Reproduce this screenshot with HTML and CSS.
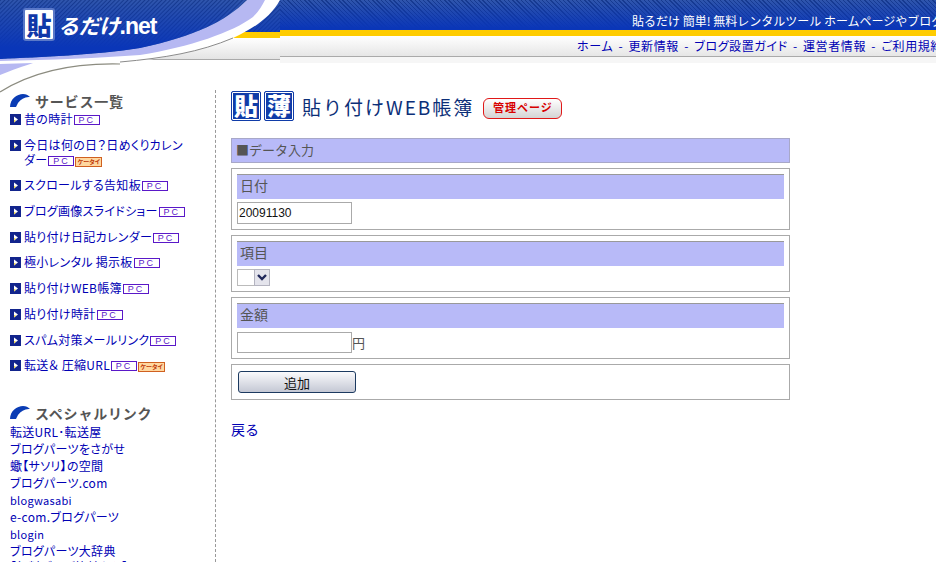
FILE: index.html
```html
<!DOCTYPE html>
<html lang="ja">
<head>
    <meta charset="UTF-8">
    <title>貼り付けWEB帳簿</title>
    <link rel="stylesheet" href="styles.css">
</head>
<body>
    <!-- Header -->
    <div class="header">
        <div class="logo-area">
            <svg class="swoosh" width="280" height="95" viewBox="0 0 280 95">
                <defs>
                    <pattern id="hatch" width="3" height="3" patternUnits="userSpaceOnUse" patternTransform="rotate(45)">
                        <rect width="3" height="3" fill="#2f55ac"/>
                        <rect width="1" height="3" fill="#173a8e"/>
                    </pattern>
                    <linearGradient id="fade" gradientUnits="userSpaceOnUse" x1="0" y1="0" x2="0" y2="50">
                        <stop offset="0" stop-color="#0a36b8" stop-opacity="0"/>
                        <stop offset="0.95" stop-color="#0a36b8"/>
                    </linearGradient>
                    <linearGradient id="band" x1="0" y1="0" x2="0" y2="1">
                        <stop offset="0" stop-color="#ffffff"/>
                        <stop offset="1" stop-color="#e4e4e4"/>
                    </linearGradient>
                </defs>
                <!-- band behind the curve -->
                <rect x="120" y="0" width="160" height="32" fill="url(#hatch)"/>
                <rect x="120" y="0" width="160" height="32" fill="url(#fade)"/>
                <rect x="120" y="32" width="160" height="6" fill="#ffcc00"/>
                <rect x="120" y="38" width="160" height="21" fill="url(#band)"/>
                <rect x="120" y="59" width="160" height="1" fill="#aaaaaa"/>
                <!-- white and lavender curves -->
                <path d="M280 0C270 18 254 28 233 38C200 52 165 58 117 64L0 64V59C90 54 190 40 247 0Z" fill="#ffffff"/>
                <path d="M247 0C225 22 195 36 140 48C95 55 40 57 0 59V61C50 60 100 58 140 55C190 47 233 32 253 17C259 11 262 6 265 0Z" fill="#b6b8f2"/>
                <path d="M233 38C200 52 165 58 120 62" fill="none" stroke="#8a8a8a" stroke-width="1"/>
                <!-- blue corner -->
                <path d="M0 0H247C225 22 195 36 140 48C95 55 40 57 0 59Z" fill="url(#hatch)"/>
                <path d="M0 0H247C225 22 195 36 140 48C95 55 40 57 0 59Z" fill="url(#fade)"/>
                <!-- lower swoosh -->
                <path d="M0 64C10 64 22 63 33 63C24 66 12 70 0 75Z" fill="#b6b8f2"/>
                <path d="M120 64C75 63 35 70 0 92" fill="none" stroke="#8c8c80" stroke-width="1.2"/>
            </svg>
            <div class="logo"><span class="logo-tile">貼</span><span class="logo-text">るだけ<b>.net</b></span></div>
        </div>
        <div class="head-right">
            <div class="head-msg">貼るだけ 簡単! 無料レンタルツール ホームページやブログに貼るだけで使えるサービス</div>
            <div class="head-nav"><a href="#">ホーム</a> - <a href="#">更新情報</a> - <a href="#">ブログ設置ガイド</a> - <a href="#">運営者情報</a> - <a href="#">ご利用規約</a></div>
        </div>
    </div>

    <div class="page">
        <!-- Side menu -->
        <div class="side">
            <h3 class="side-title">
                <svg width="20" height="13" viewBox="0 0 20 13"><path d="M0 13C0 5 7 0 13 0C16 0 18 1 20 3C15 2.5 11 5 8 9L6 13Z" fill="#0a3cb4"/></svg>
                サービス一覧
            </h3>
            <ul class="service-list">
                <li><svg class="mark" viewBox="0 0 11 11"><rect width="11" height="11" fill="#12248c"/><path d="M4 2.5L8 5.5L4 8.5Z" fill="#fff"/><path d="M4 6L6 6.5L4 8.5Z" fill="#f0d840"/></svg><span><a href="#">昔の時計</a><i class="pc">PC</i></span></li>
                <li><svg class="mark" viewBox="0 0 11 11"><rect width="11" height="11" fill="#12248c"/><path d="M4 2.5L8 5.5L4 8.5Z" fill="#fff"/><path d="M4 6L6 6.5L4 8.5Z" fill="#f0d840"/></svg><span><a href="#">今日は何の日？日めくりカレンダー</a><i class="pc">PC</i><i class="mobile">ケータイ</i></span></li>
                <li><svg class="mark" viewBox="0 0 11 11"><rect width="11" height="11" fill="#12248c"/><path d="M4 2.5L8 5.5L4 8.5Z" fill="#fff"/><path d="M4 6L6 6.5L4 8.5Z" fill="#f0d840"/></svg><span><a href="#">スクロールする告知板</a><i class="pc">PC</i></span></li>
                <li><svg class="mark" viewBox="0 0 11 11"><rect width="11" height="11" fill="#12248c"/><path d="M4 2.5L8 5.5L4 8.5Z" fill="#fff"/><path d="M4 6L6 6.5L4 8.5Z" fill="#f0d840"/></svg><span><a href="#">ブログ画像スライドショー</a><i class="pc">PC</i></span></li>
                <li><svg class="mark" viewBox="0 0 11 11"><rect width="11" height="11" fill="#12248c"/><path d="M4 2.5L8 5.5L4 8.5Z" fill="#fff"/><path d="M4 6L6 6.5L4 8.5Z" fill="#f0d840"/></svg><span><a href="#">貼り付け日記カレンダー</a><i class="pc">PC</i></span></li>
                <li><svg class="mark" viewBox="0 0 11 11"><rect width="11" height="11" fill="#12248c"/><path d="M4 2.5L8 5.5L4 8.5Z" fill="#fff"/><path d="M4 6L6 6.5L4 8.5Z" fill="#f0d840"/></svg><span><a href="#">極小レンタル 掲示板</a><i class="pc">PC</i></span></li>
                <li><svg class="mark" viewBox="0 0 11 11"><rect width="11" height="11" fill="#12248c"/><path d="M4 2.5L8 5.5L4 8.5Z" fill="#fff"/><path d="M4 6L6 6.5L4 8.5Z" fill="#f0d840"/></svg><span><a href="#">貼り付けWEB帳簿</a><i class="pc">PC</i></span></li>
                <li><svg class="mark" viewBox="0 0 11 11"><rect width="11" height="11" fill="#12248c"/><path d="M4 2.5L8 5.5L4 8.5Z" fill="#fff"/><path d="M4 6L6 6.5L4 8.5Z" fill="#f0d840"/></svg><span><a href="#">貼り付け時計</a><i class="pc">PC</i></span></li>
                <li><svg class="mark" viewBox="0 0 11 11"><rect width="11" height="11" fill="#12248c"/><path d="M4 2.5L8 5.5L4 8.5Z" fill="#fff"/><path d="M4 6L6 6.5L4 8.5Z" fill="#f0d840"/></svg><span><a href="#">スパム対策メールリンク</a><i class="pc">PC</i></span></li>
                <li><svg class="mark" viewBox="0 0 11 11"><rect width="11" height="11" fill="#12248c"/><path d="M4 2.5L8 5.5L4 8.5Z" fill="#fff"/><path d="M4 6L6 6.5L4 8.5Z" fill="#f0d840"/></svg><span><a href="#">転送＆ 圧縮URL</a><i class="pc">PC</i><i class="mobile">ケータイ</i></span></li>
            </ul>

            <h3 class="side-title">
                <svg width="20" height="13" viewBox="0 0 20 13"><path d="M0 13C0 5 7 0 13 0C16 0 18 1 20 3C15 2.5 11 5 8 9L6 13Z" fill="#0a3cb4"/></svg>
                スペシャルリンク
            </h3>
            <ul class="link-list">
                <li><a href="#">転送URL･転送屋</a></li>
                <li><a href="#">ブログパーツをさがせ</a></li>
                <li><a href="#">蠍【サソリ】の空間</a></li>
                <li><a href="#">ブログパーツ.com</a></li>
                <li><a class="small" href="#">blogwasabi</a></li>
                <li><a href="#">e-com.ブログパーツ</a></li>
                <li><a class="small" href="#">blogin</a></li>
                <li><a href="#">ブログパーツ大辞典</a></li>
                <li><a href="#">【無料ブログ比較から】</a></li>
            </ul>
        </div>

        <!-- Main form -->
        <div class="main">
            <div class="title-row">
                <span class="tile">貼</span>
                <span class="tile">薄</span>
                <h1>貼り付けWEB帳簿</h1>
                <a class="admin" href="#">管理ページ</a>
            </div>

            <div class="section-bar">■データ入力</div>

            <div class="box">
                <div class="bar">日付</div>
                <input class="field" type="text" value="20091130">
            </div>
            <div class="box">
                <div class="bar">項目</div>
                <div class="select-wrap">
                    <select class="pick"><option></option></select>
                    <svg class="arrow" width="16" height="17" viewBox="0 0 16 17"><rect width="16" height="17" fill="#b4b4c0"/><rect x="1" y="1" width="14" height="15" fill="#e4e4ec"/><path d="M4 6L8 10L12 6" fill="none" stroke="#20285a" stroke-width="2.4"/></svg>
                </div>
            </div>
            <div class="box">
                <div class="bar">金額</div>
                <div class="amount"><input class="field" type="text"><span>円</span></div>
            </div>
            <div class="box">
                <button class="add" type="button">追加</button>
            </div>

            <a class="back" href="#">戻る</a>
        </div>
    </div>
</body>
</html>
```

FILE: styles.css
```css
html, body {
    height: 100%;
    overflow: hidden;
}
body {
    margin: 0;
    background-color: #fff;
    color: #555;
    font-family: "Noto Sans CJK JP", "Liberation Sans", sans-serif;
    font-size: 12px;
}
a {
    color: #0000b4;
    text-decoration: none;
}

/* Header */
.header {
    display: flex;
    height: 90px;
}
.logo-area {
    position: relative;
    flex: none;
    width: 280px;
}
.swoosh {
    position: absolute;
    top: 0;
    left: 0;
}
.logo {
    position: relative;
    display: flex;
    align-items: center;
    gap: 3px;
    padding: 8px 0 0 23px;
}
.logo-tile {
    width: 28px;
    height: 29px;
    border: 2px solid #5a78c8;
    border-radius: 3px;
    background-color: #fff;
    color: #1038a8;
    font-size: 25px;
    font-weight: 900;
    line-height: 28px;
    text-align: center;
}
.logo-text {
    color: #fff;
    font-size: 21px;
    font-weight: 700;
    font-style: italic;
    letter-spacing: -0.5px;
}
.logo-text b {
    font-family: "Liberation Sans", sans-serif;
    font-size: 23px;
    font-style: normal;
    letter-spacing: -1px;
}
.head-right {
    flex: 1;
    min-width: 0;
    overflow: hidden;
    white-space: nowrap;
}
.head-msg {
    height: 30px;
    padding: 0 0 0 352px;
    border-bottom: 6px solid #ffcc00;
    background:
        linear-gradient(rgba(10, 54, 184, 0), #0a36b8 95%),
        repeating-linear-gradient(45deg, #2f55ac 0, #2f55ac 2px, #173a8e 2px, #173a8e 3px);
    color: #fff;
    line-height: 41px;
}
.head-nav {
    height: 20px;
    padding-left: 297px;
    border-bottom: 1px solid #aaa;
    background: linear-gradient(#fff, #e6e6e6);
    box-shadow: 0 6px 0 #f6f6f6;
    line-height: 20px;
    color: #0000b4;
    font-feature-settings: "palt";
    letter-spacing: 0.6px;
    word-spacing: 2px;
}

/* Layout */
.page {
    display: flex;
    height: 472px;
    overflow: hidden;
}
.side {
    flex: none;
    box-sizing: border-box;
    width: 216px;
    padding: 3px 0 0 10px;
    border-right: 1px dashed #999;
    overflow: hidden;
}
.side-title {
    display: flex;
    align-items: center;
    gap: 5px;
    margin: 0;
    height: 15px;
    color: #555;
    font-size: 14px;
    letter-spacing: 0.8px;
    white-space: nowrap;
}
.service-list, .link-list {
    list-style-type: none;
    margin: 0;
    padding: 0;
    font-feature-settings: "palt";
    letter-spacing: 0.3px;
}
.service-list {
    margin: 3px 0 33px;
    line-height: 15px;
}
.service-list li {
    display: flex;
    align-items: flex-start;
    gap: 3px;
    width: 178px;
    margin-bottom: 10.7px;
}
.mark {
    flex: none;
    width: 11px;
    height: 11px;
    margin-top: 3px;
}
.pc, .mobile {
    display: inline-block;
    box-sizing: border-box;
    height: 10px;
    margin-left: 1px;
    font-style: normal;
    line-height: 8px;
    text-align: center;
    vertical-align: 1px;
}
.pc {
    width: 26px;
    border: 1px solid #5a18c8;
    color: #5a18c8;
    font-family: "Liberation Sans", sans-serif;
    font-size: 9px;
    letter-spacing: 2px;
}
.mobile {
    width: 27px;
    border: 1px solid #d06020;
    background-color: #ffd8a0;
    color: #c03808;
    font-size: 6px;
    font-weight: 700;
    letter-spacing: 0;
}
.link-list {
    margin-top: 4px;
    line-height: 16.9px;
    white-space: nowrap;
}
.small {
    font-size: 11px;
}

/* Main */
.main {
    flex: none;
    width: 559px;
    margin-left: 15px;
}
.title-row {
    display: flex;
    align-items: center;
    gap: 3px;
    height: 30px;
    margin-top: 1px;
}
.tile {
    box-sizing: border-box;
    width: 30px;
    height: 30px;
    border: 1px solid #103ca8;
    outline: 1px solid #fff;
    outline-offset: -2px;
    border-radius: 2px;
    background-color: #103ca8;
    color: #fff;
    font-size: 24px;
    font-weight: 900;
    line-height: 26px;
    text-align: center;
}
.title-row h1 {
    margin: 0 6px 0 5px;
    color: #0c2f78;
    font-size: 19px;
    font-weight: 400;
    letter-spacing: 2px;
    white-space: nowrap;
}
.admin {
    box-sizing: border-box;
    width: 79px;
    height: 21px;
    margin-top: 4px;
    border: 1px solid #e01818;
    border-radius: 6px;
    background: linear-gradient(#fff, #d4d4d4);
    color: #d80000;
    font-family: "Liberation Serif", "Noto Sans CJK JP", serif;
    font-size: 11px;
    font-weight: 700;
    letter-spacing: 1px;
    line-height: 19px;
    text-align: center;
}
.section-bar {
    box-sizing: border-box;
    height: 25px;
    margin: 17px 0 5px;
    padding-left: 4px;
    border: 1px solid #a8a8c8;
    background-color: #b8baf8;
    font-size: 13px;
    line-height: 22px;
}
.box {
    margin-bottom: 5px;
    padding: 5px;
    border: 1px solid #aaa;
}
.bar {
    box-sizing: border-box;
    height: 25px;
    margin-bottom: 3px;
    padding-left: 3px;
    border-top: 1px solid #999;
    background-color: #b8baf8;
    font-size: 14px;
    line-height: 21px;
}
.field {
    box-sizing: border-box;
    display: block;
    width: 115px;
    height: 22px;
    margin: 0;
    padding: 0 1px;
    border: 1px solid #aaa;
    background-color: #fff;
    color: #111;
    font-family: "Liberation Sans", sans-serif;
    font-size: 12px;
}
.select-wrap {
    position: relative;
    width: 33px;
    height: 17px;
    margin-top: 1px;
}
.pick {
    display: block;
    box-sizing: border-box;
    width: 33px;
    height: 17px;
    border: 1px solid #bbb;
    background-color: #fff;
    appearance: none;
}
.arrow {
    position: absolute;
    top: 0;
    right: 0;
}
.amount {
    display: flex;
    align-items: center;
    padding-top: 1px;
}
.amount .field {
    height: 21px;
}
.amount span {
    font-size: 13px;
}
.add {
    display: block;
    width: 118px;
    height: 22px;
    margin: 1px;
    padding: 1px 0 0;
    border: 1px solid #1c3a60;
    border-radius: 3px;
    background: linear-gradient(#fafafc, #c4c8d4);
    color: #111;
    font-family: "Noto Sans CJK JP", sans-serif;
    font-size: 13px;
    line-height: 18px;
}
.back {
    display: inline-block;
    margin-top: 14px;
    font-size: 14px;
    line-height: 20px;
}
```
